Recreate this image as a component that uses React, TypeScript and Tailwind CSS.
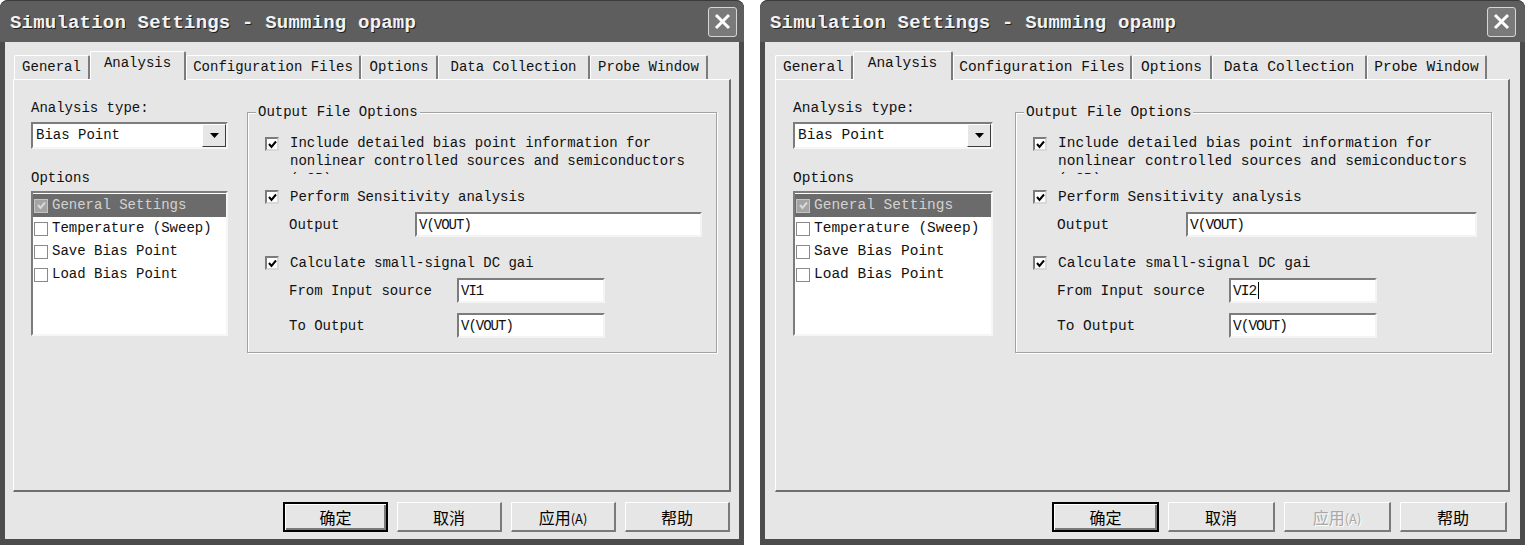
import React from 'react';

type Variant = {
  dialog: string;
  text: string;
  titlePr: string;
  tabsPl: string;
  tabW: string[];
  panel: string;
  leftCol: string;
  group: string;
  outLabel: string;
  outInput: string;
  srcLabel: string;
  srcInput: string;
  btnRow: string;
  btnW: string;
  source: string;
  caret: boolean;
  applyDisabled: boolean;
};

const left: Variant = {
  dialog: 'w-[744px]',
  text: 'text-[14px]',
  titlePr: 'pr-[7px]',
  tabsPl: 'pl-[9px]',
  tabW: ['w-[76px]', 'w-[96px]', 'w-[175px]', 'w-[77px]', 'w-[152px]', 'w-[118px]'],
  panel: 'ml-[8px] w-[718px]',
  leftCol: 'w-[197px]',
  group: 'ml-[19px] w-[470px]',
  outLabel: 'w-[126px]',
  outInput: 'w-[287px]',
  srcLabel: 'w-[168px]',
  srcInput: 'w-[148px]',
  btnRow: 'pr-[9px]',
  btnW: 'w-[105px]',
  source: 'VI1',
  caret: false,
  applyDisabled: false,
};

const right: Variant = {
  dialog: 'w-[765px]',
  text: 'text-[14.5px]',
  titlePr: 'pr-[9px]',
  tabsPl: 'pl-[10px]',
  tabW: ['w-[78px]', 'w-[100px]', 'w-[179px]', 'w-[80px]', 'w-[155px]', 'w-[120px]'],
  panel: 'ml-[10px] w-[735px]',
  leftCol: 'w-[200px]',
  group: 'ml-[22px] w-[477px]',
  outLabel: 'w-[129px]',
  outInput: 'w-[291px]',
  srcLabel: 'w-[172px]',
  srcInput: 'w-[148px]',
  btnRow: 'pr-[13px]',
  btnW: 'w-[107px]',
  source: 'VI2',
  caret: true,
  applyDisabled: true,
};

const tabs = ['General', 'Analysis', 'Configuration Files', 'Options', 'Data Collection', 'Probe Window'];

function Check({ color = '#000' }: { color?: string }) {
  return (
    <svg width="9" height="9" viewBox="0 0 9 9">
      <polyline points="1,4 3.5,7 8,1.5" fill="none" stroke={color} strokeWidth="2" />
    </svg>
  );
}

function Box({ checked }: { checked?: boolean }) {
  return (
    <span className="w-[14px] h-[14px] shrink-0 bg-white border-2 border-t-[#7c7c7c] border-l-[#7c7c7c] border-b-[#d8d8d8] border-r-[#d8d8d8] flex items-center justify-center">
      {checked && <Check />}
    </span>
  );
}

function Field({ w, value, caret }: { w: string; value: string; caret?: boolean }) {
  return (
    <div className={`${w} h-[25px] bg-white border-2 border-t-[#7c7c7c] border-l-[#7c7c7c] border-b-[#f4f4f4] border-r-[#f4f4f4] flex items-center pl-[2px] tracking-[-1px]`}>
      {value}
      {caret && <span className="w-px h-[17px] bg-black ml-[2px]" />}
    </div>
  );
}

function Button({ label, w, main, disabled }: { label: React.ReactNode; w: string; main?: boolean; disabled?: boolean }) {
  const frame = main
    ? 'border-2 border-black shadow-[inset_1px_1px_0_#fff,inset_-2px_-2px_0_#7a7a7a]'
    : 'border-t border-l border-t-white border-l-white border-b-2 border-r-2 border-b-[#7a7a7a] border-r-[#7a7a7a]';
  return (
    <div
      className={`${w} h-[30px] ${frame} flex items-center justify-center font-['Noto_Sans_CJK_SC',sans-serif] text-[16px] ${
        disabled ? 'text-[#a8a8a8] [text-shadow:1px_1px_0_#fff]' : 'text-black'
      }`}
    >
      {label}
    </div>
  );
}

function Dialog({ v }: { v: Variant }) {
  return (
    <div className={`${v.dialog} h-[545px] shrink-0 bg-[#4c4c4c] rounded-t-[8px] flex flex-col ${v.text} font-['Liberation_Mono',monospace] text-[#111]`}>
      <div className={`h-[42px] shrink-0 bg-[#5e5e5e] rounded-t-[8px] border-t border-[#3a3a3a] flex items-center justify-between pl-[10px] ${v.titlePr}`}>
        <span className="pt-[3px] text-[19px] font-bold text-[#f2f2f2] tracking-[0.2px] [text-shadow:1px_1px_0_#222]">
          Simulation Settings - Summing opamp
        </span>
        <div className="w-[29px] h-[30px] rounded-[3px] border border-[#d6d6d6] bg-[#7a7a7a] flex items-center justify-center">
          <svg width="17" height="17" viewBox="0 0 17 17">
            <path d="M2 2 L15 15 M15 2 L2 15" stroke="#fff" strokeWidth="3" />
          </svg>
        </div>
      </div>

      <div className="mx-[5px] mb-[6px] flex-1 bg-[#e6e6e6] flex flex-col">
        <div className={`flex items-end pt-[9px] ${v.tabsPl}`}>
          {tabs.map((t, i) =>
            t === 'Analysis' ? (
              <div
                key={t}
                className={`${v.tabW[i]} h-[29px] relative z-10 -mb-px bg-[#e6e6e6] border-t border-l border-t-white border-l-white border-r-2 border-r-[#7c7c7c] rounded-t-[2px] flex items-center justify-center pb-[5px]`}
              >
                {t}
              </div>
            ) : (
              <div
                key={t}
                className={`${v.tabW[i]} h-[24px] border-t border-l border-t-white border-l-white border-r-2 border-r-[#7c7c7c] rounded-t-[2px] flex items-center justify-center whitespace-nowrap`}
              >
                {t}
              </div>
            ),
          )}
        </div>

        <div className={`${v.panel} h-[413px] border-t border-l border-t-white border-l-white border-r-2 border-b-2 border-r-[#6e6e6e] border-b-[#6e6e6e] flex items-start pl-[17px] pt-[20px]`}>
          <div className={`${v.leftCol} shrink-0 flex flex-col leading-[17px]`}>
            <span>Analysis type:</span>
            <div className="mt-[5px] h-[27px] bg-white border-2 border-t-[#7c7c7c] border-l-[#7c7c7c] border-b-[#f6f6f6] border-r-[#f6f6f6] flex items-center justify-between pl-[3px]">
              <span>Bias Point</span>
              <div className="w-[24px] h-full bg-[#e6e6e6] border border-t-white border-l-white border-b-[#3c3c3c] border-r-[#3c3c3c] flex items-center justify-center">
                <svg width="9" height="5" viewBox="0 0 9 5">
                  <path d="M0 0 H9 L4.5 5 Z" fill="#000" />
                </svg>
              </div>
            </div>
            <span className="mt-[21px]">Options</span>
            <div className="mt-[4px] h-[145px] bg-white border-2 border-t-[#7c7c7c] border-l-[#7c7c7c] border-b-[#f6f6f6] border-r-[#f6f6f6] pt-[1px] flex flex-col">
              <div className="h-[23px] bg-[#6b6b6b] text-[#d2d2d2] flex items-center gap-[4px] pl-[1px]">
                <span className="w-[14px] h-[14px] bg-[#a4a4a4] border border-[#c4c4c4] flex items-center justify-center">
                  <Check color="#d8d8d8" />
                </span>
                General Settings
              </div>
              {['Temperature (Sweep)', 'Save Bias Point', 'Load Bias Point'].map((s) => (
                <div key={s} className="h-[23px] flex items-center gap-[4px] pl-[1px] whitespace-nowrap">
                  <span className="w-[14px] h-[14px] bg-white border border-[#8a8a8a]" />
                  {s}
                </div>
              ))}
            </div>
          </div>

          <fieldset className={`${v.group} mt-[4px] border border-[#a2a2a2] shadow-[inset_1px_1px_0_#fff,1px_1px_0_#fff] pl-[17px] pb-[14px] leading-[18px]`}>
            <legend className="-ml-[9px] px-[2px] bg-[#e6e6e6] leading-[17px]">Output File Options</legend>
            <div className="mt-[13px] flex items-start gap-[11px]">
              <span className="mt-[3px]">
                <Box checked />
              </span>
              <div className="h-[40px] overflow-hidden">
                Include detailed bias point information for nonlinear controlled sources and semiconductors (.OP)
              </div>
            </div>
            <div className="mt-[14px] flex items-center gap-[11px]">
              <Box checked />
              <span>Perform Sensitivity analysis</span>
            </div>
            <div className="mt-[6px] flex items-center pl-[24px]">
              <span className={`${v.outLabel} shrink-0`}>Output</span>
              <Field w={v.outInput} value="V(VOUT)" />
            </div>
            <div className="mt-[17px] flex items-center gap-[11px]">
              <Box checked />
              <span>Calculate small-signal DC gai</span>
            </div>
            <div className="mt-[6px] flex items-center pl-[24px]">
              <span className={`${v.srcLabel} shrink-0`}>From Input source</span>
              <Field w={v.srcInput} value={v.source} caret={v.caret} />
            </div>
            <div className="mt-[10px] flex items-center pl-[24px]">
              <span className={`${v.srcLabel} shrink-0`}>To Output</span>
              <Field w={v.srcInput} value="V(VOUT)" />
            </div>
          </fieldset>
        </div>

        <div className={`mt-[10px] flex justify-end gap-[9px] ${v.btnRow}`}>
          <Button w={v.btnW} main label="确定" />
          <Button w={v.btnW} label="取消" />
          <Button
            w={v.btnW}
            disabled={v.applyDisabled}
            label={
              <span>
                应用<span className="text-[13px]">(A)</span>
              </span>
            }
          />
          <Button w={v.btnW} label="帮助" />
        </div>
      </div>
    </div>
  );
}

export default function App() {
  return (
    <div className="w-[1525px] h-[545px] bg-white flex justify-between overflow-hidden">
      <Dialog v={left} />
      <Dialog v={right} />
    </div>
  );
}
